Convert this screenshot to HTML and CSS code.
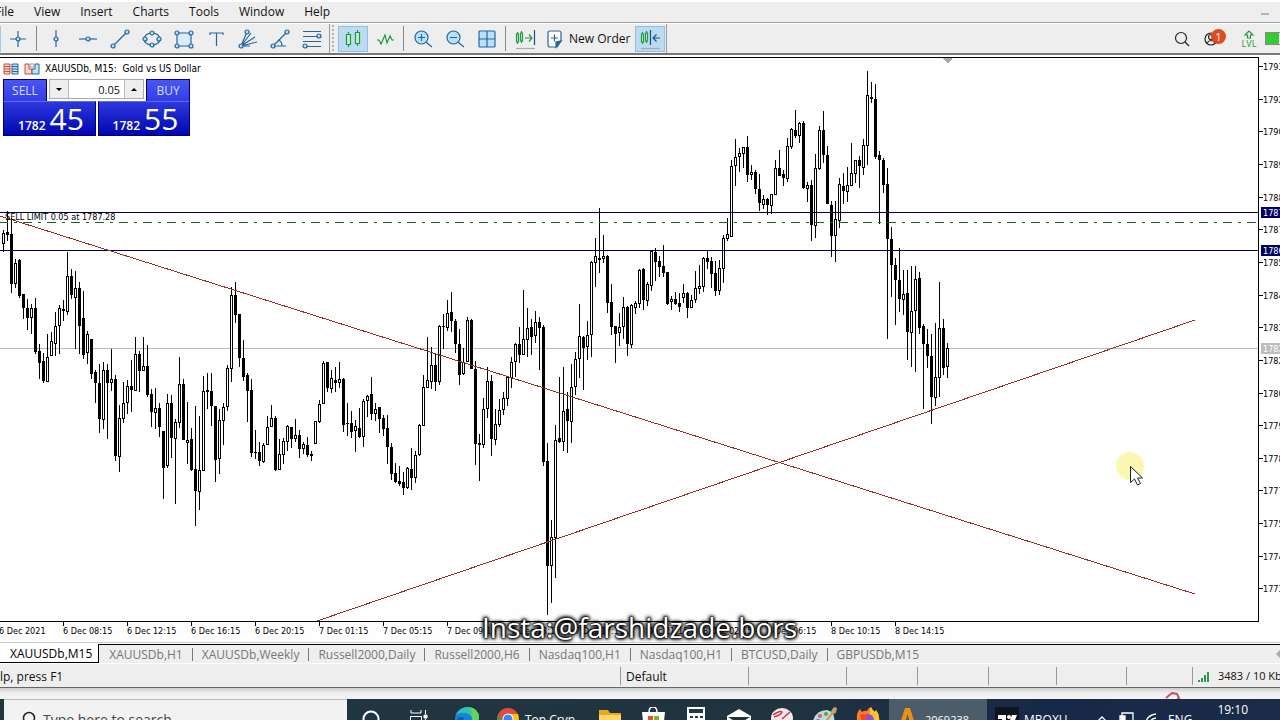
FILE: index.html
```html
<!DOCTYPE html>
<html lang="en">
<head>
<meta charset="utf-8">
<title>XAUUSDb, M15</title>
<link rel="stylesheet" href="styles.css">
</head>
<body>
<nav class="menubar">
  <button>File</button><button>View</button><button>Insert</button><button>Charts</button><button>Tools</button><button>Window</button><button>Help</button>
  <span class="minimize"></span>
</nav>

<div class="toolbar">
  <span class="edge"></span>
  <button class="tool" aria-label="Crosshair"><svg viewBox="0 0 20 20"><path d="M10 2v16M2 10h16"/><circle cx="10" cy="10" r="2"/></svg></button>
  <span class="sep"></span>
  <button class="tool" aria-label="Vertical line"><svg viewBox="0 0 20 20"><path d="M10 1v17"/><circle cx="10" cy="10" r="2"/></svg></button>
  <button class="tool" aria-label="Horizontal line"><svg viewBox="0 0 20 20"><path d="M1 10h18"/><circle cx="10" cy="10" r="2"/></svg></button>
  <button class="tool" aria-label="Trendline"><svg viewBox="0 0 20 20"><path d="M3 17L17 3"/><circle cx="3" cy="17" r="2"/><circle cx="17" cy="3" r="2"/></svg></button>
  <button class="tool" aria-label="Ellipse"><svg viewBox="0 0 20 20"><ellipse cx="10" cy="10" rx="8" ry="6"/><circle cx="10" cy="4" r="2"/><circle cx="3" cy="10" r="2"/><circle cx="17" cy="10" r="2"/><circle cx="10" cy="16" r="2"/></svg></button>
  <button class="tool" aria-label="Rectangle"><svg viewBox="0 0 20 20"><path class="blue" d="M3 4h14v13H3z"/><circle cx="3" cy="4" r="2"/><circle cx="17" cy="4" r="2"/><circle cx="3" cy="17" r="2"/><circle cx="17" cy="17" r="2"/></svg></button>
  <button class="tool" aria-label="Text"><svg viewBox="0 0 20 20"><path d="M4 6V4h13v2M10.500 4v13"/></svg></button>
  <button class="tool" aria-label="Gann fan"><svg viewBox="0 0 20 20"><path d="M3 17L9 3M3 17L13 4M3 17L17 8M3 17l16-4M3 17h9"/><circle cx="3" cy="17" r="2"/><circle cx="9" cy="3" r="2"/></svg></button>
  <button class="tool" aria-label="Angle"><svg viewBox="0 0 20 20"><path d="M3 17L17 3M3 17h13M8 11q4 1 4 6"/><circle cx="3" cy="17" r="2"/><circle cx="17" cy="3" r="2"/></svg></button>
  <button class="tool" aria-label="Fibonacci"><svg viewBox="0 0 20 20"><path d="M1 2.500h18M1 7.500h16M1 12.500h18M3 17.500h16"/><circle cx="17" cy="7" r="2"/><circle cx="3" cy="17" r="2"/></svg></button>
  <span class="grip"></span>
  <button class="tool on" aria-label="Candlesticks"><svg class="green" viewBox="0 0 20 20"><path d="M5.500 3v15M14.500 1v16"/><path class="body" d="M3.500 5.500h4v10h-4zM12.500 3.500h4v11h-4z"/></svg></button>
  <button class="tool" aria-label="Line chart"><svg class="green" viewBox="0 0 20 20"><path d="M2 11h2l2 4 4-9 2 8 3-7 2 4h2"/></svg></button>
  <span class="sep"></span>
  <button class="tool" aria-label="Zoom in"><svg viewBox="0 0 20 20"><circle cx="8.500" cy="8.500" r="6.500"/><path d="M13 13l6 5M5 8.500h7M8.500 5v7"/></svg></button>
  <button class="tool" aria-label="Zoom out"><svg viewBox="0 0 20 20"><circle cx="8.500" cy="8.500" r="6.500"/><path d="M13 13l6 5M5 8.500h7"/></svg></button>
  <button class="tool" aria-label="Tile windows"><svg viewBox="0 0 20 20"><rect x="2" y="2" width="16" height="16" rx="1"/><path d="M10 2v16M2 10h16"/></svg></button>
  <span class="sep"></span>
  <button class="tool" aria-label="Shift chart"><svg class="green" viewBox="0 0 20 20"><path d="M2.500 3v12M6.500 2v12"/><path class="body" d="M1.500 5h2v8h-2zM5.500 4h2v8h-2z"/><path d="M10 9h7M14 5.500L17 9l-3 3.500"/><path class="ink" d="M19.500 1v15"/><path class="grey" d="M1 19.500h19"/></svg></button>
  <button class="neworder"><svg viewBox="0 0 20 20"><path class="page" d="M5 2h9q2 0 2 2v8l-4 6H5q-2 0-2-2V4q0-2 2-2z"/><path class="fold" d="M16 12l-5 6v-5z"/><path d="M6 9h7M9.500 5.500v7"/></svg>New Order</button>
  <button class="tool on" aria-label="Autoscroll"><svg class="green" viewBox="0 0 20 20"><path d="M2.500 3v12M6.500 2v12"/><path class="body" d="M1.500 5h2v8h-2zM5.500 4h2v8h-2z"/><path class="ink" d="M10.500 1v15M20 9h-6M16.500 5.500L13 9l3.500 3.500"/><path class="grey" d="M1 19.500h19"/></svg></button>
  <span class="bar"></span>
  <div class="right">
    <button class="tool" aria-label="Search"><svg class="dark" viewBox="0 0 20 20"><circle cx="9" cy="9" r="5.500"/><path d="M13 13l4 4"/></svg></button>
    <button class="tool user" aria-label="Account"><svg class="dark" viewBox="0 0 20 20"><circle cx="9" cy="10" r="6"/><circle cx="9" cy="8" r="2.500"/><path d="M5 14q4-5 8 0"/></svg><span class="badge">1</span></button>
    <button class="level" aria-label="Level"><svg class="green" viewBox="0 0 12 9"><path d="M4.500 8V5H2l4-4 4 4H7.500v3z"/></svg>LVL</button>
    <span class="battery"></span>
  </div>
</div>

<main class="chart">
  <div class="plot">
    <svg class="canvas" role="img" aria-label="Gold vs US Dollar candles">
      <g transform="translate(0,-58)">
        <path class="marker" d="M943 58h9v1l-4 4h-1l-4-4z"/>
        <rect class="bid" x="0" y="348" width="100%" height="1"/>
        <g id="candles"></g>
        <rect class="level-line" x="0" y="212" width="100%" height="1"/>
        <rect class="level-line" x="0" y="250" width="100%" height="1"/>
        <line class="order" x1="0" y1="222.500" x2="100%" y2="222.500"/>
        <path class="trend" d="M0 216L1195 594M317 621L1195 320"/>
        <text class="label" x="5" y="220">SELL LIMIT 0.05 at 1787.28</text>
        <circle class="halo" cx="1130" cy="466" r="14"/>
        <path class="pointer" d="M1130.500 466.500v16l4-3.500 3 6 3-1.500-3-5.500h5z"/>
      </g>
    </svg>
    <div class="overlay">
      <div class="title">
        <svg viewBox="0 0 16 12"><path class="red fillr" d="M1 1h6v10H1zM1 3.500h6M1 6h6M1 8.500h6"/><path class="navy fillb" d="M9 1h6v10H9zM9 3.500h6M9 6h6M9 8.500h6"/></svg>
        <svg viewBox="0 0 16 12"><path class="red fillr" d="M1 1h4v5h3v5H1z"/><path class="navy fillb" d="M15 1h-4v5H8v5h7z"/><path class="grey" d="M6 1h4v3H6z"/></svg>
        <span>XAUUSDb, M15:&nbsp; Gold vs US Dollar</span>
      </div>
      <div class="trade">
        <button class="side">SELL</button>
        <div class="lots">
          <button aria-label="Decrease volume"><i class="down"></i></button>
          <input type="text" value="0.05" aria-label="Volume">
          <button aria-label="Increase volume"><i class="up"></i></button>
        </div>
        <button class="side">BUY</button>
        <button class="price"><b>1782</b><span>45</span></button>
        <button class="price buy"><b>1782</b><span>55</span></button>
      </div>
    </div>
  </div>
  <svg class="prices" id="prices" aria-label="Price scale"></svg>
  <ol class="times">
    <li>6 Dec 2021</li><li>6 Dec 08:15</li><li>6 Dec 12:15</li><li>6 Dec 16:15</li><li>6 Dec 20:15</li><li>7 Dec 01:15</li><li>7 Dec 05:15</li><li>7 Dec 09:15</li><li>7 Dec 13:15</li><li>7 Dec 17:15</li><li>7 Dec 21:15</li><li>8 Dec 02:15</li><li>8 Dec 06:15</li><li>8 Dec 10:15</li><li>8 Dec 14:15</li>
  </ol>
  <div class="watermark">Insta:@farshidzade.bors</div>
</main>

<div class="tabs">
  <button class="tab current">XAUUSDb,M15</button><button class="tab">XAUUSDb,H1</button><button class="tab">XAUUSDb,Weekly</button><button class="tab">Russell2000,Daily</button><button class="tab">Russell2000,H6</button><button class="tab">Nasdaq100,H1</button><button class="tab">Nasdaq100,H1</button><button class="tab">BTCUSD,Daily</button><button class="tab">GBPUSDb,M15</button>
  <i class="scroll"></i>
</div>

<footer class="status">
  <span>lp, press F1</span><span>Default</span><span></span><span></span><span></span><span></span><span></span><span></span>
  <span class="net"><svg viewBox="0 0 13 12"><path d="M0 10h2v2H0zM3 8h2v4H3zM6 5h2v7H6zM9 2h2v10H9z"/></svg>3483 / 10 Kb</span>
</footer>

<div class="desktop"><svg viewBox="0 0 16 8"><path d="M1 6l6-5 5 1 2 4-2 2"/></svg></div>

<div class="taskbar">
  <label class="search"><svg viewBox="0 0 16 20"><circle cx="9" cy="8" r="5.500"/><path d="M5 12l-4 5"/></svg><input type="text" placeholder="Type here to search" aria-label="Type here to search"></label>
  <button class="app cortana" aria-label="Cortana"><svg viewBox="0 0 24 24"><circle cx="12" cy="12" r="7.500" fill="none" stroke="#fff" stroke-width="2"/></svg></button>
  <button class="app tasks" aria-label="Task view"><svg viewBox="0 0 24 24" fill="none" stroke="#fff"><path d="M5 3v3h10V3M5 21v-3h10v3M4.500 9.500h11v6h-11zM19.500 3v4M19.500 12v9"/><path d="M18 8h3v3h-3z" fill="#fff"/></svg></button>
  <button class="app" aria-label="Edge"><svg viewBox="0 0 24 24"><circle cx="12" cy="12" r="12" fill="#1683d8"/><path d="M1 8Q5 0 13 0q11 1 11 11-1 5-8 4 3-6-3-8Q6 4 1 8z" fill="#35c1b2"/><path d="M13 0q11 1 11 11-1 5-8 4 3-3 0-7 2-5-3-8z" fill="#64d45a"/><path d="M9 11q-3 8 5 11-9 2-12-7 0-7 7-4z" fill="#155aa8"/></svg></button>
  <button class="app named chrome"><svg viewBox="0 0 24 24"><circle cx="12" cy="12" r="11" fill="#e34b3d"/><path d="M2 8l7 8 2 7Q0 20 2 8z" fill="#2ba24c"/><path d="M12 7h10q4 14-11 16l5-9z" fill="#fbc116"/><circle cx="12" cy="12" r="5.500" fill="#fff"/><circle cx="12" cy="12" r="4.500" fill="#4285f4"/></svg><span>Top Cryp</span></button>
  <button class="app" aria-label="Explorer"><svg viewBox="0 0 24 24"><path d="M1 3h9l2 3h11v15H1z" fill="#e8a921"/><path d="M1 8h22v13H1z" fill="#ffd667"/></svg></button>
  <button class="app" aria-label="Store"><svg viewBox="0 0 24 24"><path d="M8 5q0-5 4-5t4 5" fill="none" stroke="#fff" stroke-width="1.500"/><path d="M1 5h23l-2 18H3z" fill="#fff"/><path d="M7 9h5v5H7z" fill="#e9512b"/><path d="M13 9h5v5h-5z" fill="#7eb52a"/><path d="M7 15h5v5H7z" fill="#31a5e2"/><path d="M13 15h5v5h-5z" fill="#f5bb22"/></svg></button>
  <button class="app" aria-label="Calculator"><svg viewBox="0 0 24 24"><path d="M3 0h18v24H3z" fill="#fff"/><path d="M5 2h14v4H5zM6 9h3v2H6zM11 9h3v2h-3zM16 9h3v2h-3zM6 14h3v2H6zM11 14h3v2h-3zM16 14h3v2h-3z" fill="#223746"/></svg></button>
  <button class="app" aria-label="Mail"><svg viewBox="0 0 24 24"><path d="M0 9l12-7 12 7v14H0z" fill="#fff"/><path d="M1 10h22l-11 7z" fill="#20343f"/></svg></button>
  <button class="app" aria-label="Snip"><svg viewBox="0 0 24 24"><ellipse cx="12" cy="11" rx="11" ry="10" fill="#f1e8ea"/><path d="M3 8q7-5 9-3-1 3-8 5M12 12L20 5" fill="none" stroke="#cf3244" stroke-width="1.500"/></svg></button>
  <button class="app" aria-label="Paint"><svg viewBox="0 0 24 24"><path d="M0 14Q3 3 14 3q9 2 7 12-4 7-13 7-8-2-8-8z" fill="#b9dbe6"/><circle cx="7" cy="9" r="2" fill="#e76047"/><circle cx="13" cy="7" r="2" fill="#5b9f44"/><circle cx="5" cy="14" r="2" fill="#347cc4"/><path d="M10 18L21 4" stroke="#d99531" stroke-width="2"/><path d="M18 4l3-4 3 1-1 5-3 1z" fill="#c7a26a"/></svg></button>
  <button class="app" aria-label="Firefox"><svg viewBox="0 0 24 24"><path d="M1 13Q0 6 4 2l2 3q3-2 5-1 1-3 4-4 1 3 4 5l1-2q4 5 3 11-2 10-11 10T1 13z" fill="#ff7b25"/><path d="M15 0q1 3 4 5l1-2q4 5 3 11-2 9-8 9 5-7-1-13-1-6 1-10z" fill="#ffc42c"/><circle cx="12" cy="13" r="6" fill="#8750d9"/><path d="M4 8q5-2 9 2-4 0-4 4-5 0-5-6z" fill="#f0472f"/></svg></button>
  <button class="app named active"><svg viewBox="0 0 24 24"><path d="M3 23L10 1h5l7 22h-5L12.500 7 8 23z" fill="#e89114"/></svg><span>2069238</span></button>
  <button class="app named tv"><svg viewBox="0 0 24 24"><path d="M0 0h24v24H0z" fill="#10141d"/><path d="M3 8h8v10H7v-6H3zM17 8h5l-4 10h-5z" fill="#fff"/><circle cx="14" cy="10" r="2" fill="#fff"/></svg><span>MBOXU</span></button>
  <div class="tray">
    <svg viewBox="0 0 24 24"><path d="M7 15l5-5 5 5"/></svg>
    <svg viewBox="0 0 24 24"><path d="M8 6h11v11H8z"/><path fill="#fff" d="M6 9h5v9H6z"/></svg>
    <svg viewBox="0 0 24 24"><path d="M7 19Q8 8 18 7M11 19q0-7 7-8M15 19q0-3 3-4"/></svg>
    <span>ENG</span>
    <time>19:10</time>
  </div>
</div>
<script src="chart.js"></script>
</body>
</html>
```

FILE: styles.css
```css
* { box-sizing: border-box; }
body { margin: 0; height: 100vh; overflow: hidden; display: flex; flex-direction: column; background: #fff; color: #111; font: 12px "Open Sans", "Noto Sans", sans-serif; }
body > * { flex: none; }
button { border: 0; margin: 0; padding: 0; background: none; color: inherit; font: inherit; white-space: nowrap; }
svg { display: block; }

.menubar { display: flex; align-items: center; height: 21px; margin-top: 2px; padding-right: 11px; border-bottom: 1px solid #a0a0a0; background: #eee; }
.menubar button { padding: 0 10px; line-height: 20px; }
.menubar button:first-child { margin-left: -15px; }
.minimize { width: 8px; height: 2px; margin-left: auto; margin-top: 3px; background: #b4b4b4; }

.toolbar { display: flex; align-items: center; gap: 2px; height: 32px; border-top: 1px solid #fff; border-bottom: 2px solid #777; background: #eee; }
.edge { width: 1px; height: 26px; background: #9ccbee; }
.tool { display: grid; place-items: center; flex: none; width: 30px; height: 26px; position: relative; }
.tool.on { border: 1px solid #92bfe4; background: #bcdaf2; }
.toolbar svg { width: 20px; height: 20px; fill: none; stroke: #25679c; stroke-width: 1.2; overflow: visible; }
.toolbar svg circle, .toolbar svg rect { fill: #b9e0fa; }
.toolbar svg ellipse { fill: none; }
.toolbar svg .blue { fill: #d8edfb; }
.toolbar svg.green { stroke: #1f9a3c; }
.toolbar svg .body { fill: #c8f0cc; }
.toolbar svg .ink { stroke: #14548a; }
.toolbar svg .grey { stroke: #aaa; }
.toolbar svg .page { fill: #fff; }
.toolbar svg .fold { fill: #25679c; }
.toolbar svg.dark { stroke: #222; }
.toolbar svg.dark circle { fill: none; }
.sep { width: 1px; height: 25px; margin: 0 2px 0 1px; background: #888; }
.bar { width: 1px; height: 29px; margin-left: -1px; background: #999; }
.grip { display: flex; justify-content: center; width: 7px; height: 29px; border-left: 1px solid #999; }
.grip::before { content: ""; width: 2px; height: 26px; margin-top: 1px; background: repeating-linear-gradient(#b4b4b4 0 2px, transparent 2px 4px); }
.neworder { display: flex; align-items: center; gap: 4px; width: 91px; padding-left: 3px; }
.right { display: flex; align-items: center; margin-left: auto; }
.badge { position: absolute; left: 14px; top: 3px; width: 15px; height: 15px; border-radius: 50%; background: #e04a20; color: #fff; font-size: 11px; line-height: 15px; text-align: center; }
.level { display: flex; flex-direction: column; align-items: center; width: 24px; margin-left: 10px; color: #1f9a3c; font-size: 9px; line-height: 9px; }
.toolbar .level svg { width: 12px; height: 9px; }
.battery { width: 15px; height: 13px; margin-left: 4px; border: 1px solid #888; border-right: 0; background: linear-gradient(90deg, #3c3 13px, #fff 13px); }

.chart { position: relative; display: grid; grid-template-columns: minmax(0, 1fr) 21px; margin-top: 2px; padding-bottom: 1px; border-bottom: 1px solid #ccc; font: 9px "DejaVu Sans Condensed", "DejaVu Sans", sans-serif; color: #000; background: #fefefe; }
.plot { position: relative; border: 1px solid #000; border-left: 0; }
.canvas { width: 100%; height: 563px; shape-rendering: crispEdges; }
.marker { fill: #aaa; }
.bid { fill: #b8b8b8; }
.level-line { fill: #00003c; }
.order { stroke: #1c641c; stroke-dasharray: 9 6 3 6; stroke-dashoffset: 1; }
.trend { fill: none; stroke: #93301f; }
.halo { fill: #fbf6b2; shape-rendering: auto; }
.pointer { fill: #fff; stroke: #222; shape-rendering: auto; }
.wick, .full { fill: #000; }
.hollow { fill: #fff; stroke: #000; }

.overlay { position: absolute; left: 3px; top: 3px; }
.title { display: flex; align-items: center; gap: 5px; height: 15px; font-size: 10px; }
.title svg { width: 16px; height: 12px; fill: none; }
.red { stroke: #c8523c; }
.navy { stroke: #2a6596; }
.grey { stroke: #999; }
.fillr { fill: #fbd5cb; }
.fillb { fill: #bfe3fb; }

.trade { display: grid; grid-template-columns: 44px 1fr 44px; width: 187px; margin-top: 3px; font: 12px "Open Sans", sans-serif; color: #fff; }
.trade > .side { height: 22px; border: 1px solid #00007c; border-bottom: 0; background: linear-gradient(#4a55f4, #323ee4); color: #d8dcff; }
.lots { display: grid; grid-template-columns: 18px 1fr 18px; height: 20px; margin: 0 2px; border: 1px solid #aaa; background: #fff; }
.lots button { display: grid; place-items: center; background: #eee; }
.lots input { width: 100%; min-width: 0; border: solid #bbb; border-width: 0 1px; padding: 0 4px; background: #fff; color: #111; font: 11px "Open Sans", sans-serif; text-align: right; }
.down, .up { border: 3px solid transparent; }
.down { border-top-color: #000; border-bottom: 0; }
.up { border-bottom-color: #000; border-top: 0; }
.price { display: flex; align-items: flex-end; justify-content: center; gap: 4px; width: 93px; height: 35px; padding-left: 3px; grid-column: 1 / 3; grid-row: 2; border: 1px solid #00007c; border-top-color: #5f6af4; background: linear-gradient(#2c38de, #0006b0); line-height: 18px; }
.price.buy { grid-column: 2 / 4; width: 92px; justify-self: end; }
.price b { font-weight: 600; }
.price span { font-size: 30px; line-height: 32px; }

.prices { width: 21px; height: 565px; overflow: hidden; }
.prices .tick { fill: #000; }
.prices .tag { fill: #000064; }
.prices .tag.now { fill: #bdbdbd; }
.prices .light { fill: #fff; }
.times { grid-column: 1 / 3; display: flex; height: 19px; margin: 0 0 0 -1px; padding: 0; list-style: none; overflow: hidden; }
.times li { flex: none; width: 64px; padding-top: 3px; line-height: 12px; background: linear-gradient(#000, #000) 0 0 / 1px 4px no-repeat; white-space: nowrap; }
.watermark { position: absolute; left: 482px; bottom: -4px; color: #fff; font: 28px/38px "Open Sans", sans-serif; text-shadow: 0 0 2px #000, 0 0 2px #000, 0 0 3px #000, 0 0 4px #000, 1px 1px 4px #000, -1px -1px 4px #000; z-index: 1; }

.tabs { display: flex; height: 19px; margin-top: 1px; border-top: 1px solid #000; background: #eee; color: #777; }
.tab { position: relative; padding: 0 9px 0 10px; line-height: 20px; }
.tab + .tab + .tab::before { content: ""; position: absolute; left: 0; top: 3px; width: 1px; height: 13px; background: #777; }
.tab.current { padding: 0 6px 0 10px; margin-top: -1px; border: solid #000; border-width: 0 1px 1px 0; background: #fff; color: #000; }
.scroll { margin: 5px 0 0 auto; border: 4px solid transparent; border-right-color: #aaa; border-left: 0; height: 8px; }

.status { display: grid; grid-template-columns: 1fr 128px 98px 71px 71px 68px 70px 66px 88px; height: 25px; padding-top: 3px; border-top: 1px solid #fff; border-bottom: 1px solid #666; background: #eee; }
.status span { height: 18px; padding-left: 5px; border-left: 1px solid #999; line-height: 20px; white-space: nowrap; overflow: hidden; }
.status span:first-child { padding-left: 0; border: 0; }
.status .net { display: flex; align-items: center; gap: 7px; font-size: 11px; }
.net svg { flex: none; width: 13px; height: 12px; fill: #2c9d44; }
.desktop { height: 11px; background: linear-gradient(#ccc, #f0f0f0 5px, #f4f4f4); }
.desktop svg { width: 16px; height: 8px; margin: 4px 99px 0 auto; fill: none; stroke: #c3555a; stroke-width: 2; }

.taskbar { display: flex; height: 40px; padding-left: 4px; background: linear-gradient(90deg, #20363f, #20343f 60%, #182848 82%, #1a2c48); color: #fff; }
.search { display: flex; align-items: center; gap: 7px; flex: none; width: 343px; padding-left: 16px; border-top: 1px solid #bbb; background: #f2f2f2; }
.search svg { width: 16px; height: 20px; fill: none; stroke: #222; stroke-width: 1.5; }
.search input { flex: 1; border: 0; padding: 0; background: none; font: 14px "Open Sans", sans-serif; }
.search input::placeholder { color: #444; opacity: 1; }
.app { display: flex; align-items: center; justify-content: center; flex: none; width: 43px; }
.app svg { flex: none; width: 24px; height: 24px; }
.app.cortana { width: 48px; }
.app.tasks { width: 50px; padding-right: 4px; }
.app.named { justify-content: flex-start; gap: 5px; width: 98px; padding-left: 8px; }
.app.named.chrome { width: 100px; }
.app.active { background: #4c5c68; }
.app.named.active { gap: 6px; padding-left: 6px; font-size: 11px; }
.tray { display: flex; align-items: center; margin-left: auto; padding-right: 32px; }
.tray svg { width: 24px; height: 24px; fill: none; stroke: #fff; stroke-width: 1.3; }
.tray span { margin-left: 6px; }
.tray time { align-self: flex-start; margin-left: 25px; padding-top: 2px; line-height: 17px; }
```

FILE: chart.js
```js
// Each candle: high, body top, body bottom, low; a leading "-" marks a falling (filled) candle.
const candles = `230,233,243,252 -211,232,235,241 -218,234,284,293 259,263,283,288 -259,260,296,298 -294,294,308,319 -299,308,318,330 304,308,317,334
-298,308,352,354 -344,351,363,379 -353,361,381,383 334,357,381,381 332,341,355,355 312,326,343,356 305,308,325,354 -300,309,311,321
252,276,311,315 -269,276,295,299 271,288,297,349 -282,288,326,354 -291,318,355,359 331,334,352,364 -339,339,374,379 -370,372,383,403
-364,383,419,433 362,370,419,429 -364,370,383,439 349,379,382,391 -375,379,456,461 405,418,456,472 382,403,418,423 380,386,402,414
-360,386,390,412 337,354,390,391 -351,354,371,392 337,366,370,371 -345,366,395,397 -389,394,412,427 388,408,412,429 -403,408,427,437
-431,431,468,499 394,403,465,468 -395,403,438,458 419,422,438,504 357,384,422,428 -379,384,440,440 402,440,442,464 -428,439,470,471
-406,469,491,526 416,470,491,510 376,391,470,471 -373,390,392,409 -373,391,406,426 -406,406,460,482 409,420,458,474 403,407,420,445
365,368,406,411 287,295,368,382 -282,295,315,323 -314,314,358,367 -340,358,377,381 -373,375,391,422 -379,390,453,457 -430,452,453,459
-442,452,461,466 443,445,461,463 416,427,444,445 405,418,426,427 -416,418,470,471 439,454,469,469 438,441,454,464 425,426,441,451
-427,427,439,448 419,435,438,442 -430,435,449,458 442,444,448,454 -437,445,455,457 -451,454,456,461 421,421,443,443 400,404,421,423
361,363,403,404 -362,362,388,392 370,378,388,393 -367,380,383,392 362,379,382,388 -378,379,425,432 -403,423,424,436 -411,423,432,438
420,426,430,452 -408,428,437,438 399,401,436,447 395,396,400,417 -377,394,414,420 403,409,413,421 -407,407,419,433 -415,418,429,436
-415,428,447,464 -443,447,474,480 -463,473,482,483 -466,481,484,486 -472,482,488,495 467,468,487,489 -448,469,478,490 451,455,477,483
424,425,454,456 375,387,425,425 337,380,387,388 347,365,381,389 -353,365,382,391 325,326,381,385 -314,326,327,349 300,313,327,331
-292,312,321,332 -319,321,344,353 -329,344,375,385 348,362,373,375 317,320,361,362 -319,320,369,369 -361,369,444,465 -434,443,445,481
398,409,444,448 367,381,408,418 -375,381,439,456 409,424,439,445 399,410,424,427 392,398,409,415 377,377,398,406 357,362,377,388
343,344,361,377 -327,344,355,363 290,339,354,355 308,328,339,357 -319,327,337,355 311,322,335,343 -317,322,328,370 -325,327,462,466
-443,461,566,615 520,537,565,603 425,440,537,578 -377,438,442,443 367,411,441,451 -392,409,421,453 364,387,421,443 352,359,386,395
304,336,358,378 -336,337,348,390 321,335,346,360 261,262,334,357 238,256,262,287 -208,258,260,273 235,256,258,263 -255,256,303,313
-284,302,327,335 -326,326,334,363 313,327,332,346 297,307,326,339 -306,307,344,356 304,305,344,348 301,303,307,314 269,270,303,308
-268,269,300,310 282,284,300,306 250,251,285,291 -248,252,262,281 -256,261,267,277 -245,266,273,277 -272,272,304,305 296,299,301,310
-292,299,304,305 -293,303,307,312 284,293,297,303 -292,293,308,318 295,300,307,308 271,288,299,303 265,286,288,294 257,258,286,292
-250,258,262,269 -257,261,274,288 -261,273,291,296 260,268,290,295 235,238,268,283 218,234,238,241 160,166,236,236 139,157,165,186
148,153,156,172 147,147,153,168 -136,147,175,182 165,172,174,180 -170,172,189,194 -174,189,203,211 195,199,204,209 -198,199,205,215
194,194,205,214 160,168,194,195 -150,168,176,176 -170,174,178,186 138,146,178,182 128,129,146,149 -110,130,136,138 122,123,135,143
-121,123,188,189 182,185,188,202 -180,185,225,241 154,168,225,238 126,130,168,170 -111,130,155,163 -146,155,204,204 -201,205,236,257
201,219,235,262 178,184,220,228 -173,186,191,204 167,185,191,202 143,173,185,186 160,160,173,183 -156,160,166,188 139,145,167,175
71,95,145,165 -82,97,99,103 -84,99,157,159 -151,155,160,224 -158,160,185,193 -168,184,239,339 -227,239,265,297 -258,265,280,325
-248,280,299,312 270,294,299,315 -270,293,332,360 266,311,332,367 266,279,310,372 -272,278,328,334 -324,326,344,409 -329,344,356,368
-334,356,397,424 323,377,397,406 282,328,377,397 -319,328,368,375 343,348,366,378`.split(/\s+/);

const rect = (cls, x, y, w, h) => `<rect class="${cls}" x="${x}" y="${y}" width="${w}" height="${h}"/>`;

document.getElementById("candles").innerHTML = candles.map((row, i) => {
  const falling = row[0] === "-";
  const [high, top, bottom, low] = row.replace("-", "").split(",").map(Number);
  const x = 3 + 4 * i;
  const body = falling
    ? rect("full", x - 1, top, 3, Math.max(1, bottom - top))
    : rect("hollow", x - 0.5, top + 0.5, 2, bottom - top);
  return rect("wick", x, high, 1, low - high) + body;
}).join("");

const scale = [[66, "1793"], [99, "1792"], [131, "1790"], [164, "1789"], [197, "1788"], [229, "1787"], [262, "1785"], [295, "1784"],
  [327, "1783"], [360, "1782"], [393, "1780"], [425, "1779"], [458, "1778"], [490, "1777"], [523, "1775"], [556, "1774"], [588, "1773"]];
const tags = [[212, "1787", "tag"], [250, "1786", "tag"], [348, "1782", "tag now"]];

document.getElementById("prices").innerHTML =
  scale.map(([y, t]) => rect("tick", 0, y - 57, 4, 1) + `<text x="4" y="${y - 53}">${t}</text>`).join("") +
  tags.map(([y, t, c]) => rect(c, 2, y - 62, 19, 11) + `<text class="light" x="4" y="${y - 53}">${t}</text>`).join("");
```
